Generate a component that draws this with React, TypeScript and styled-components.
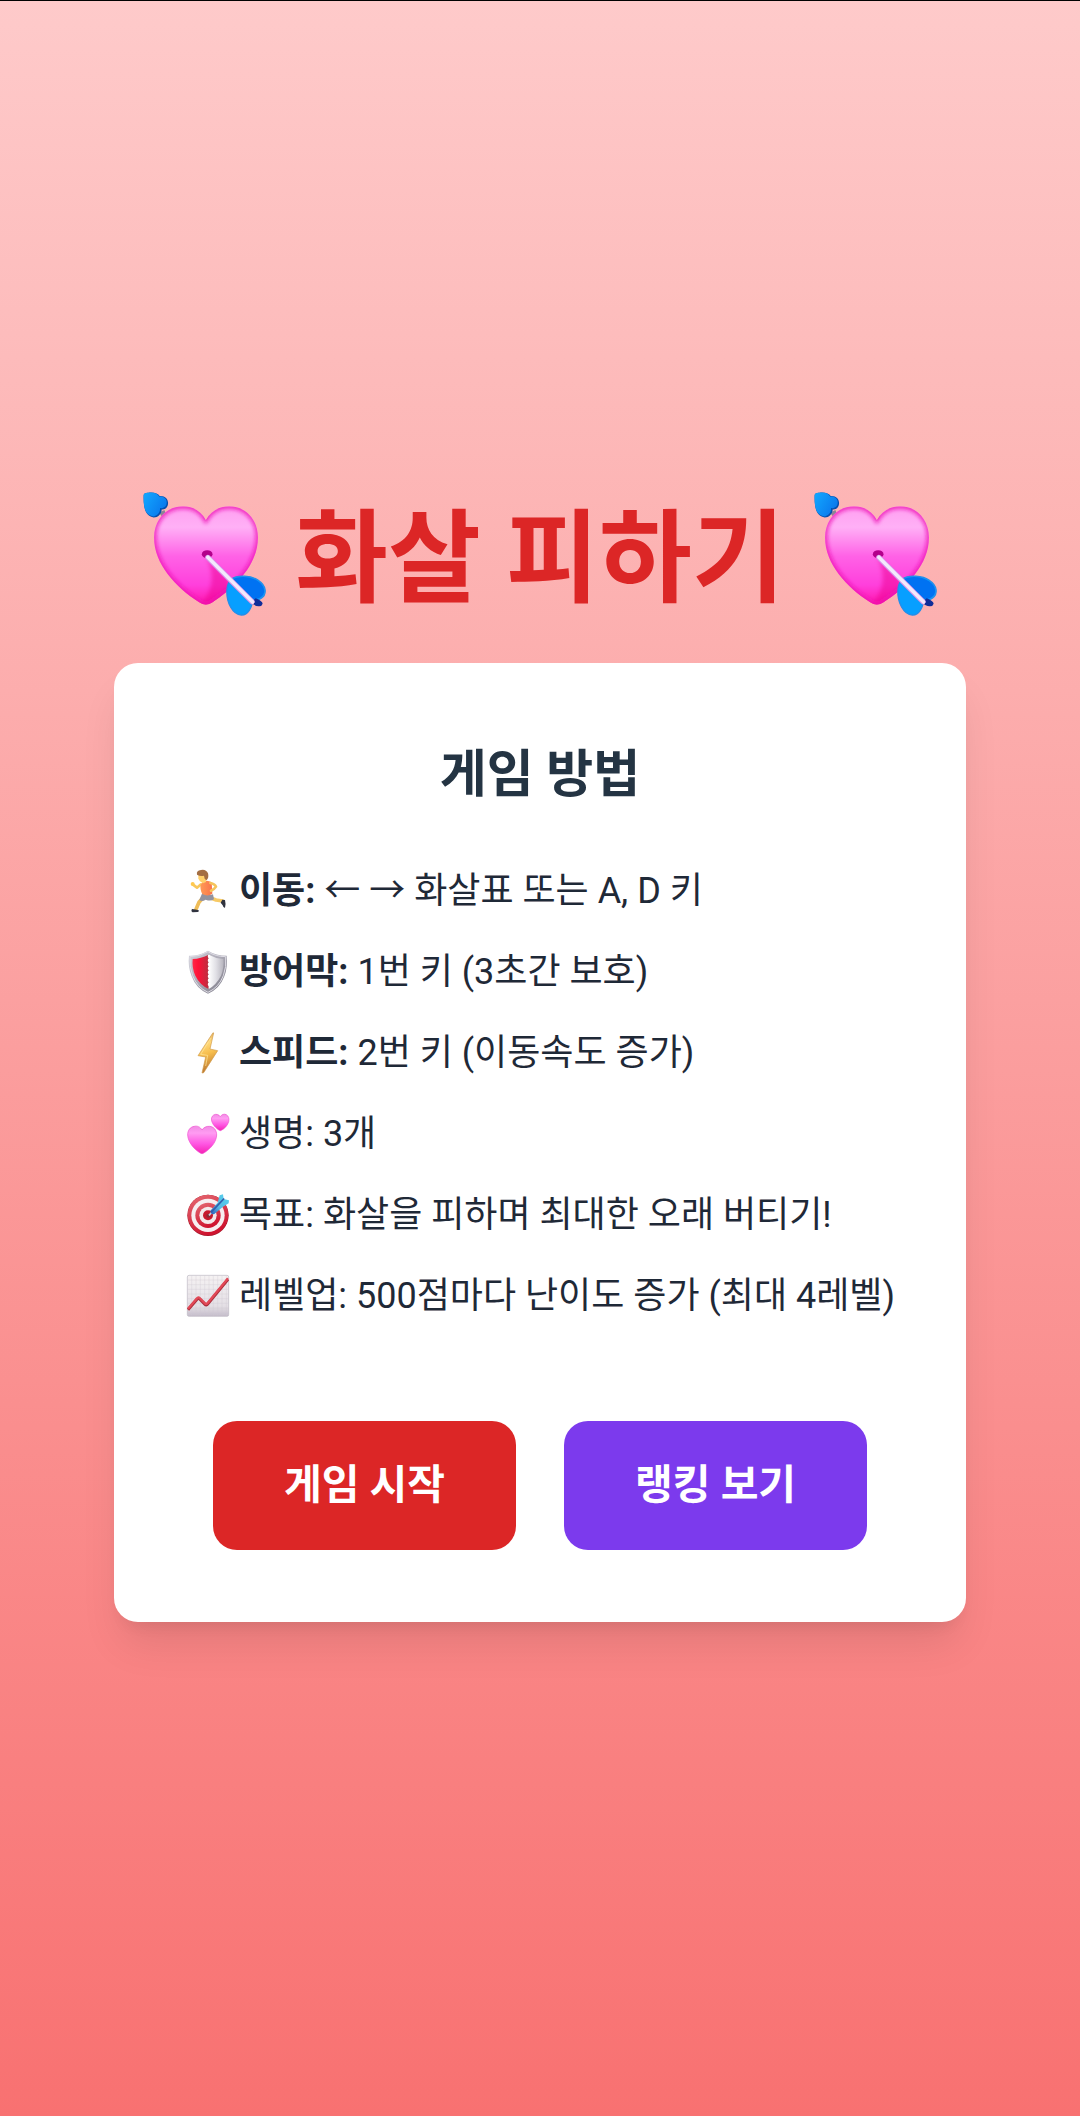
import React from 'react';
import styled, { createGlobalStyle } from 'styled-components';

const GlobalStyle = createGlobalStyle`
  *, *::before, *::after { box-sizing: border-box; }
  body { margin: 0; }
  body, button {
    font-family: Roboto, 'Noto Sans CJK KR', sans-serif;
  }
`;

const Page = styled.main`
  min-height: 100vh;
  display: flex;
  flex-direction: column;
  align-items: center;
  justify-content: center;
  padding: 32px 32px 36px;
  border-top: 1px solid #000;
  background: linear-gradient(to bottom, #fecaca, #f87171);
  color: #1f2937;
`;

const Title = styled.h1`
  display: flex;
  flex-wrap: wrap;
  align-items: flex-start;
  justify-content: center;
  gap: 29px;
  margin: 0 0 36px;
  font-size: 101px;
  line-height: 135px;
  font-weight: 700;
  color: #dc2626;
`;

const Card = styled.section`
  width: 100%;
  max-width: 852px;
  padding: 72px;
  border-radius: 24px;
  background: #fff;
  box-shadow: 0 28px 42px -8px rgba(0, 0, 0, 0.1), 0 11px 17px -11px rgba(0, 0, 0, 0.1);
`;

const CardTitle = styled.h2`
  margin: 0 0 48px;
  font-size: 51px;
  line-height: 80px;
  font-weight: 700;
  text-align: center;
  color: #243443;
`;

const Rules = styled.ul`
  display: flex;
  flex-direction: column;
  gap: 24px;
  margin: 0 0 96px;
  padding: 0;
  list-style: none;
`;

const Rule = styled.li`
  display: flex;
  align-items: center;
  gap: 9px;
  font-size: 36px;
  line-height: 57px;

  @media (min-width: 900px) {
    white-space: nowrap;
  }
`;

const Actions = styled.div`
  display: flex;
  flex-wrap: wrap;
  justify-content: center;
  gap: 48px;
`;

const ActionButton = styled.button<{ $color: string }>`
  padding: 36px 71px;
  border: 0;
  border-radius: 24px;
  background: ${(p) => p.$color};
  color: #fff;
  font-size: 41px;
  line-height: 57px;
  font-weight: 700;
  cursor: pointer;
`;

const Icon = styled.svg<{ $size: number }>`
  flex: none;
  width: ${(p) => p.$size}px;
  height: ${(p) => p.$size}px;
  overflow: visible;
`;

const HeartArrow = ({ id }: { id: string }) => (
  <Icon $size={123} viewBox="68 68 368 368" aria-hidden="true">
    <defs>
      <linearGradient id={`${id}-body`} x1="0" y1="0" x2="0" y2="1">
        <stop offset="0" stopColor="#ff9df0" />
        <stop offset="0.22" stopColor="#ffb0f6" />
        <stop offset="0.5" stopColor="#ff62e6" />
        <stop offset="0.78" stopColor="#ff3fdc" />
        <stop offset="1" stopColor="#ff0fa4" />
      </linearGradient>
      <linearGradient id={`${id}-tip`} x1="0" y1="0" x2="1" y2="0.6">
        <stop offset="0" stopColor="#12a8ff" />
        <stop offset="1" stopColor="#0a78ec" />
      </linearGradient>
      <filter id={`${id}-soft`} x="-20%" y="-20%" width="140%" height="140%">
        <feGaussianBlur stdDeviation="6" />
      </filter>
      <clipPath id={`${id}-clip`}>
        <path d="M256 152C243 127 219 111 188 111C138 111 101 150 101 204C101 283 165 352 236 398Q256 412 276 398C347 352 412 283 412 204C412 150 375 111 326 111C294 111 270 127 256 152Z" />
      </clipPath>
    </defs>
    <path d="M116 130L132 122L140 142L128 146Z" fill="#8c8494" />
    <path d="M70 76Q72 69 84 70C101 68 113 72 118 80C132 78 143 88 143 101C143 112 136 122 124 120C123 134 113 144 100 144C80 140 68 126 70 76Z" fill="#0750ad" />
    <path d="M70 76Q72 69 84 70C101 68 112 73 117 82C129 80 139 88 139 99C139 110 132 118 119 116C120 130 110 139 99 141C80 138 68 125 70 76Z" fill={`url(#${id}-tip)`} />
    <g clipPath={`url(#${id}-clip)`}>
      <rect x="95" y="105" width="325" height="310" fill={`url(#${id}-body)`} />
      <path d="M258 262L330 335L318 400L230 415Q300 350 258 262Z" fill="#ed008f" opacity="0.5" filter={`url(#${id}-soft)`} />
      <path d="M256 152C243 127 219 111 188 111C138 111 101 150 101 204C101 283 165 352 236 398Q256 412 276 398C347 352 412 283 412 204C412 150 375 111 326 111C294 111 270 127 256 152Z" fill="none" stroke="#ee16b5" strokeWidth="12" filter={`url(#${id}-soft)`} />
    </g>
    <ellipse cx="260" cy="254" rx="16" ry="12" fill="#b3008b" />
    <path d="M332 329C350 315 393 317 414 333C438 349 439 374 422 386C414 392 402 393 395 391C395 413 382 437 362 436C336 435 317 398 319 362C320 348 325 336 332 329Z" fill="#079fff" stroke="#248eea" strokeWidth="4" />
    <path d="M334 331C352 318 391 320 412 335C434 350 436 372 420 383C410 390 397 389 389 386Z" fill="#0072f2" />
    <path d="M391 398L405 386Q425 394 426 402Q423 411 414 410Q402 410 391 398Z" fill="#102d99" />
    <path d="M262 264L394 396" stroke="#d68ee7" strokeWidth="16" strokeLinecap="round" />
    <path d="M262 263L396 397" stroke="#f3e9fc" strokeWidth="11" strokeLinecap="round" />
  </Icon>
);

const Runner = () => (
  <Icon $size={44} viewBox="49 57 132 132" aria-hidden="true">
    <defs>
      <linearGradient id="shirt" x1="0" x2="1">
        <stop offset="0" stopColor="#ff9a55" />
        <stop offset="1" stopColor="#f9744c" />
      </linearGradient>
    </defs>
    <g fill="none" strokeLinecap="round" strokeLinejoin="round">
      <path d="M104 139L88 157L79 178" stroke="#efbd58" strokeWidth="11" />
      <path d="M119 142L139 150L159 153" stroke="#f7ca66" strokeWidth="11" />
      <path d="M94 103L82 113L69 103" stroke="#f8c75c" strokeWidth="8" />
    </g>
    <circle cx="69" cy="102" r="6" fill="#ffc94f" />
    <path d="M67 177Q78 178 87 181Q90 184 84 186L69 187Q63 184 67 177Z" fill="#30333f" />
    <path d="M158 149L166 150Q169 160 166 173Q161 174 159 166L153 158Z" fill="#30333f" />
    <path d="M99 127Q115 139 130 133L133 148Q123 155 108 149Q97 157 89 150Q94 138 99 127Z" fill="#93939f" />
    <path d="M101 94Q114 89 126 97L128 131Q115 141 98 132Q90 117 93 104Z" fill="url(#shirt)" />
    <path d="M122 99Q136 102 139 110Q134 118 124 122" fill="none" stroke="#f5c45b" strokeWidth="8" strokeLinecap="round" strokeLinejoin="round" />
    <path d="M86 73Q98 64 109 75L109 96L100 100L91 94L86 86Z" fill="#ffd06a" />
    <path d="M82 74Q79 62 94 60Q109 57 115 70Q119 84 110 91L105 86L103 77Q92 80 82 74Z" fill="#a36e43" />
  </Icon>
);

const Shield = () => (
  <Icon $size={44} viewBox="49 301 132 132" aria-hidden="true">
    <defs>
      <linearGradient id="rim" x1="0" y1="0" x2="1" y2="1">
        <stop offset="0" stopColor="#d5d5de" />
        <stop offset="0.5" stopColor="#aaa8b4" />
        <stop offset="1" stopColor="#777681" />
      </linearGradient>
      <linearGradient id="red-half" x1="0" x2="1">
        <stop offset="0" stopColor="#ff2848" />
        <stop offset="0.35" stopColor="#ff1237" />
        <stop offset="1" stopColor="#ba3040" />
      </linearGradient>
      <linearGradient id="silver-half" x1="0" x2="1">
        <stop offset="0" stopColor="#fff" />
        <stop offset="0.5" stopColor="#e0dfe5" />
        <stop offset="1" stopColor="#b7b5be" />
      </linearGradient>
    </defs>
    <path d="M115 303Q139 318 171 318Q175 351 164 380Q150 418 115 432Q79 417 66 380Q54 350 58 318Q89 319 115 303Z" fill="url(#rim)" />
    <path d="M115 306Q138 321 168 321Q171 352 161 378Q148 413 115 428Q82 413 69 378Q58 350 61 321Q91 321 115 306Z" fill="none" stroke="#dedce5" strokeWidth="3" />
    <path d="M117 315Q94 327 69 328Q66 354 77 378Q90 405 117 418Z" fill="url(#red-half)" />
    <path d="M117 315Q139 327 161 328Q164 354 154 378Q140 405 117 418Z" fill="url(#silver-half)" />
    <path d="M118 319V415" stroke="#fff" strokeWidth="7" strokeLinecap="round" strokeDasharray="2 10" />
  </Icon>
);

const Bolt = () => (
  <Icon $size={44} viewBox="49 91 132 132" aria-hidden="true">
    <defs>
      <linearGradient id="bolt" x1="0" y1="0" x2="0.2" y2="1">
        <stop offset="0" stopColor="#d39a51" />
        <stop offset="0.35" stopColor="#ffd778" />
        <stop offset="0.6" stopColor="#f6bd4c" />
        <stop offset="1" stopColor="#bc7832" />
      </linearGradient>
    </defs>
    <path d="M130 96L85 165L108 169L97 217L102 216L144 150L121 145L132 97Z" fill="url(#bolt)" stroke="#d09a49" strokeWidth="2" strokeLinejoin="round" />
    <path d="M124 112L93 161L114 164L108 196" fill="none" stroke="#ffe69b" strokeWidth="3" opacity="0.7" />
  </Icon>
);

const Hearts = () => (
  <Icon $size={44} viewBox="49 333 132 132" aria-hidden="true">
    <defs>
      <linearGradient id="pink" x1="0" y1="0" x2="0" y2="1">
        <stop offset="0" stopColor="#f18be4" />
        <stop offset="0.25" stopColor="#ff9cf2" />
        <stop offset="0.65" stopColor="#ff55e2" />
        <stop offset="1" stopColor="#f521b4" />
      </linearGradient>
    </defs>
    <g fill="url(#pink)" stroke="#ef4fce" strokeWidth="2">
      <path d="M97 387C91 377 83 374 74 376C61 378 54 388 54 402C55 425 75 446 93 457Q97 459 101 457C121 445 140 425 141 402C141 387 132 377 120 376C110 375 101 380 97 387Z" />
      <path d="M152 347C147 340 139 338 132 342C125 346 124 355 127 363C131 374 142 384 149 388Q152 390 155 388C164 383 174 374 177 362C179 353 177 345 170 341C163 338 156 340 152 347Z" />
    </g>
  </Icon>
);

const Target = () => (
  <Icon $size={44} viewBox="49 95 132 132" aria-hidden="true">
    <defs>
      <linearGradient id="ring" x1="0" y1="0" x2="0.4" y2="1">
        <stop offset="0" stopColor="#e56b73" />
        <stop offset="1" stopColor="#cf142f" />
      </linearGradient>
      <linearGradient id="flight" x1="0" y1="1" x2="1" y2="0">
        <stop offset="0" stopColor="#2e55b5" />
        <stop offset="0.4" stopColor="#54bae5" />
        <stop offset="1" stopColor="#58d5ee" />
      </linearGradient>
    </defs>
    <circle cx="115" cy="162" r="62" fill="#a6182b" />
    <circle cx="115" cy="161" r="61" fill="url(#ring)" />
    <circle cx="115" cy="162" r="50" fill="#f7eef0" />
    <circle cx="115" cy="162" r="38" fill="url(#ring)" />
    <circle cx="115" cy="162" r="26" fill="#f4e9ea" />
    <circle cx="115" cy="162" r="15" fill="#c7192d" />
    <circle cx="116" cy="163" r="6" fill="#8b2a35" />
    <path d="M118 162L132 147" stroke="#c8d4df" strokeWidth="5" />
    <path d="M122 148L144 124L150 102L160 99L162 113L178 117L177 126L160 136L134 158Q124 161 122 148Z" fill="url(#flight)" />
    <path d="M126 151L162 113" stroke="#315dab" strokeWidth="5" strokeLinecap="round" />
  </Icon>
);

const Chart = () => (
  <Icon $size={44} viewBox="49 338 132 132" aria-hidden="true">
    <defs>
      <linearGradient id="paper" x1="0" y1="0" x2="0" y2="1">
        <stop offset="0" stopColor="#f5f2f3" />
        <stop offset="0.75" stopColor="#e4dfe5" />
        <stop offset="1" stopColor="#c5bdcb" />
      </linearGradient>
    </defs>
    <rect x="53" y="342" width="124" height="123" rx="5" fill="url(#paper)" stroke="#bdb8c3" strokeWidth="2" />
    <path d="M66 343V463M79 343V463M92 343V463M105 343V463M118 343V463M131 343V463M144 343V463M157 343V463M170 343V463M54 356H176M54 370H176M54 384H176M54 398H176M54 412H176M54 426H176M54 440H176M54 454H176" stroke="#cfc8d0" strokeWidth="1" />
    <path d="M55 445L82 414Q86 409 90 413L106 429Q110 433 114 428L175 354" fill="none" stroke="#ad2e3c" strokeWidth="9" />
    <path d="M55 442L82 411Q86 406 90 410L106 426Q110 430 114 425L175 351" fill="none" stroke="#e24957" strokeWidth="7" />
  </Icon>
);

export default function App() {
  return (
    <>
      <GlobalStyle />
      <Page>
        <Title>
          <HeartArrow id="left" />
          <span>화살 피하기</span>
          <HeartArrow id="right" />
        </Title>
        <Card>
          <CardTitle>게임 방법</CardTitle>
          <Rules>
            <Rule>
              <Runner />
              <span><strong>이동:</strong> ← → 화살표 또는 A, D 키</span>
            </Rule>
            <Rule>
              <Shield />
              <span><strong>방어막:</strong> 1번 키 (3초간 보호)</span>
            </Rule>
            <Rule>
              <Bolt />
              <span><strong>스피드:</strong> 2번 키 (이동속도 증가)</span>
            </Rule>
            <Rule>
              <Hearts />
              <span>생명: 3개</span>
            </Rule>
            <Rule>
              <Target />
              <span>목표: 화살을 피하며 최대한 오래 버티기!</span>
            </Rule>
            <Rule>
              <Chart />
              <span>레벨업: 500점마다 난이도 증가 (최대 4레벨)</span>
            </Rule>
          </Rules>
          <Actions>
            <ActionButton type="button" $color="#dc2626">게임 시작</ActionButton>
            <ActionButton type="button" $color="#7c3aed">랭킹 보기</ActionButton>
          </Actions>
        </Card>
      </Page>
    </>
  );
}
